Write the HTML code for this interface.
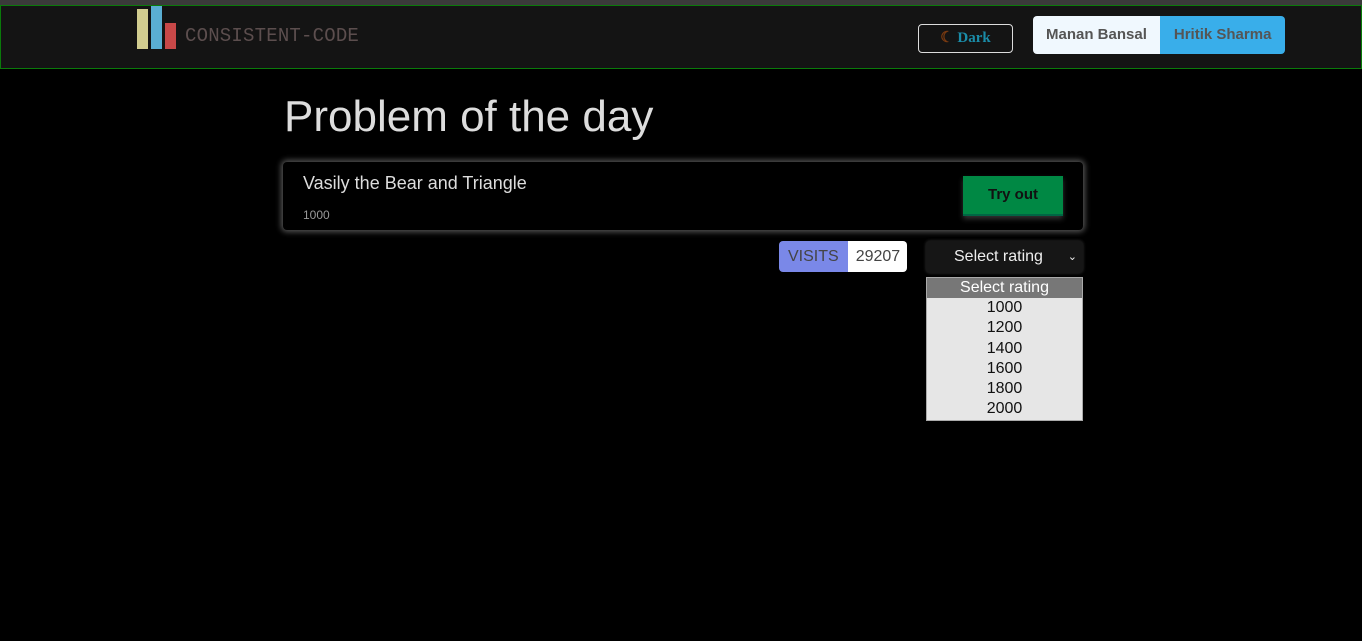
<!DOCTYPE html>
<html><head><style>
body{margin:0;background:#000;width:1362px;height:641px;overflow:hidden;font-family:"Liberation Sans",sans-serif;position:relative}
.top{position:absolute;left:0;top:0;width:1362px;height:5px;background:#3a3a3a}
.nav{position:absolute;left:0;top:5px;width:1360px;height:62px;background:#141414;border:1px solid #0a7a0a}
.bar{position:absolute}
.logo{position:absolute;left:185px;top:25px;font-family:"Liberation Mono",monospace;font-size:19px;color:#5c4e4e;letter-spacing:0.2px}
.dark{position:absolute;left:918px;top:24px;width:95px;height:29px;border:1px solid #ddd;border-radius:4px;box-sizing:border-box;color:#1a8ca8;font-family:"Liberation Serif",serif;font-weight:bold;font-size:15px;line-height:27px;text-align:center}
.tog{position:absolute;left:1033px;top:16px;height:38px;border-radius:4px;overflow:hidden;display:flex;font-weight:bold;font-size:15px;color:#555}
.tog div{line-height:38px;padding:0 13px}
h1{position:absolute;left:284px;top:92px;margin:0;font-weight:normal;font-size:44px;color:#ddd}
.card{position:absolute;left:283px;top:162px;width:800px;height:68px;border-radius:4px;background:#000;box-shadow:0 0 6px 2px #555}
.t{position:absolute;left:20px;top:11px;font-size:18px;color:#ddd}
.r{position:absolute;left:20px;top:46px;font-size:12px;color:#999}
.btn{position:absolute;left:680px;top:14px;width:100px;height:38px;background:#008844;border-bottom:2px solid #064;color:#111;font-weight:bold;font-size:15px;text-align:center;line-height:38px;box-shadow:0 3px 5px #333}
.vis{position:absolute;left:779px;top:241px;height:31px;border-radius:4px;overflow:hidden;display:flex;font-size:16px}
.sel{position:absolute;left:926px;top:241px;width:157px;height:32px;background:#161616;border-radius:4px;color:#eee;font-size:16px;line-height:32px;box-shadow:0 0 3px #333}
.list{position:absolute;left:926px;top:277px;width:155px;height:142px;background:#e6e6e6;border:1px solid #aaa;font-size:16px;text-align:center;color:#111}
.list div{height:20.2px;line-height:20px}
</style></head><body>
<div class="top"></div>
<div class="nav">
<div class="bar" style="left:136px;top:3px;width:11px;height:40px;background:#d2cd90"></div>
<div class="bar" style="left:150px;top:0px;width:11px;height:43px;background:#5aaed3"></div>
<div class="bar" style="left:164px;top:17px;width:11px;height:26px;background:#c84848"></div>
</div>
<div class="logo">CONSISTENT-CODE</div>
<div class="dark"><span style="color:#7a3a10">☾</span> Dark</div>
<div class="tog"><div style="background:#f0f8fe">Manan Bansal</div><div style="background:#39aeea;padding:0 14px">Hritik Sharma</div></div>
<h1>Problem of the day</h1>
<div class="card"><div class="t">Vasily the Bear and Triangle</div><div class="r">1000</div><div class="btn">Try out</div></div>
<div class="vis"><div style="background:#7a88e8;color:#444;padding:0 9px;line-height:31px">VISITS</div><div style="background:#fff;color:#444;padding:0 7px 0 8px;line-height:31px">29207</div></div>
<div class="sel"><span style="margin-left:28px">Select rating</span><span style="position:absolute;right:6px;font-size:11px">&#8964;</span></div>
<div class="list"><div style="background:#777;color:#fff">Select rating</div><div>1000</div><div>1200</div><div>1400</div><div>1600</div><div>1800</div><div>2000</div></div>
</body></html>
